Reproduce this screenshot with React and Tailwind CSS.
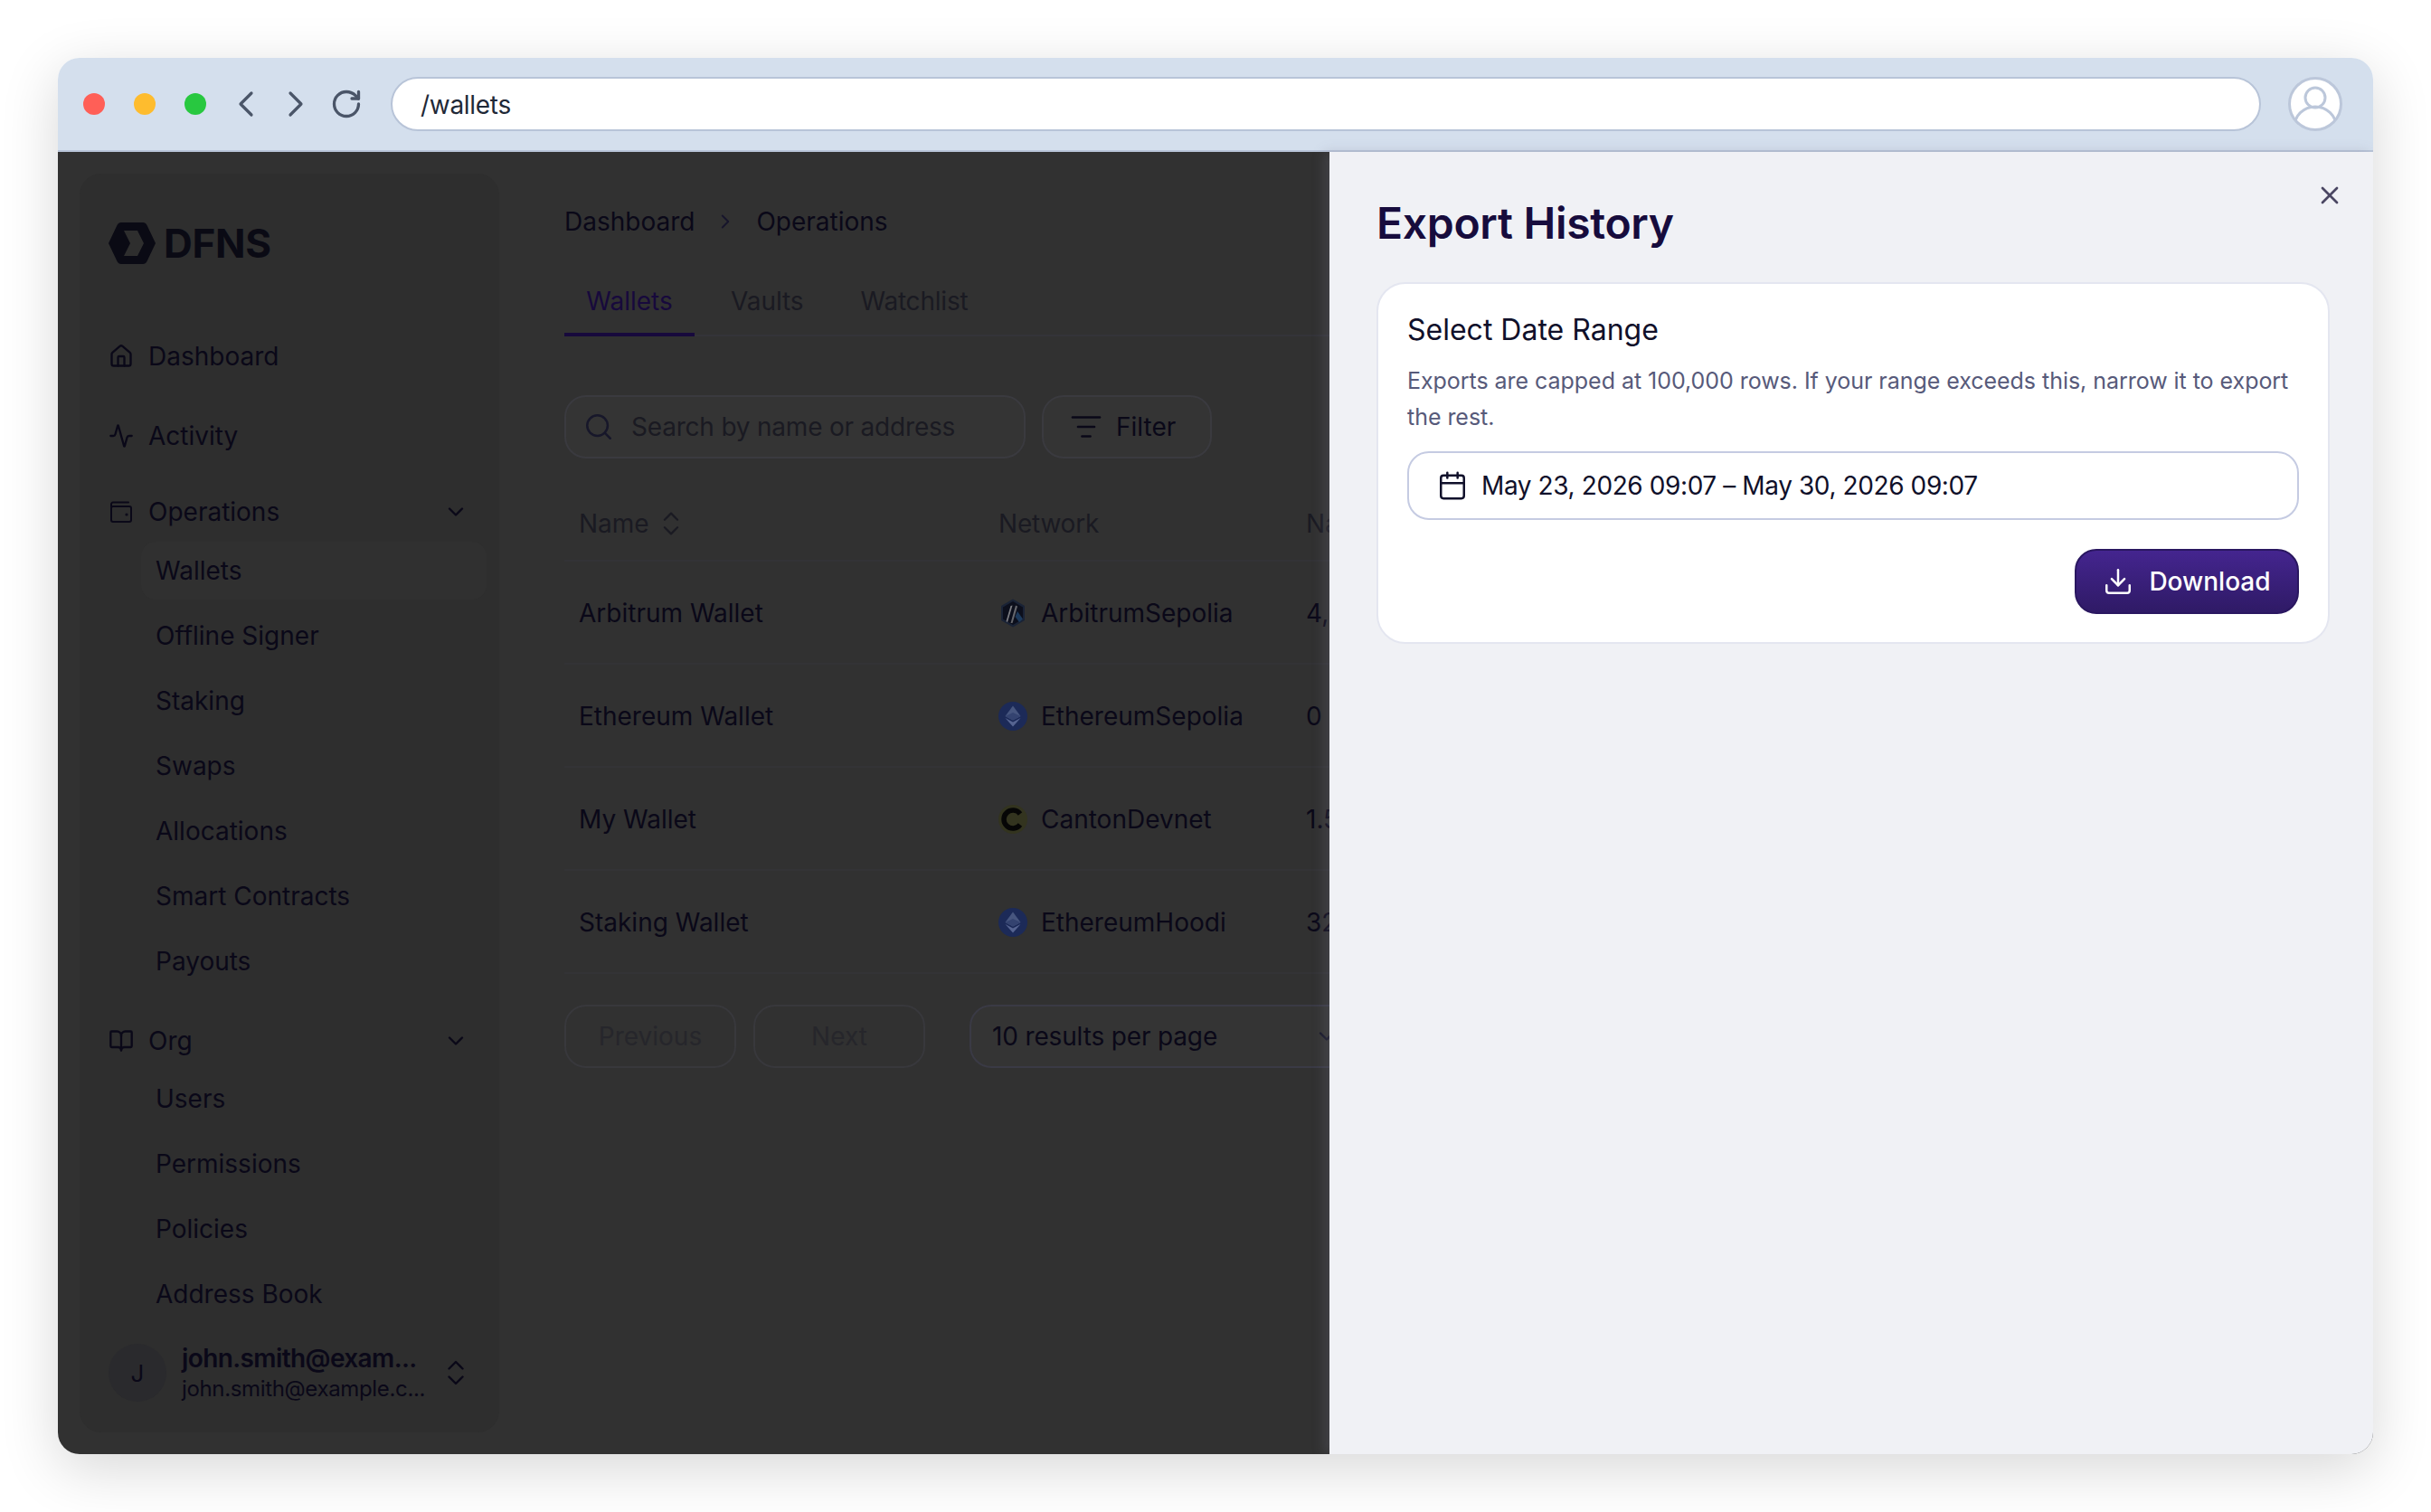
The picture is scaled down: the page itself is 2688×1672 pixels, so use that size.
import { useState } from "react";
import {
  Activity,
  BookOpen,
  Calendar,
  ChevronDown,
  ChevronLeft,
  ChevronRight,
  ChevronsUpDown,
  Download,
  House,
  ListFilter,
  RotateCw,
  Search,
  X,
} from "lucide-react";

const operations = ["Wallets", "Offline Signer", "Staking", "Swaps", "Allocations", "Smart Contracts", "Payouts"];
const org = ["Users", "Permissions", "Policies", "Address Book"];

const rows = [
  { name: "Arbitrum Wallet", network: "ArbitrumSepolia", icon: "arb", value: "4,2" },
  { name: "Ethereum Wallet", network: "EthereumSepolia", icon: "eth", value: "0" },
  { name: "My Wallet", network: "CantonDevnet", icon: "canton", value: "1.5" },
  { name: "Staking Wallet", network: "EthereumHoodi", icon: "eth", value: "32" },
];

function WalletIcon() {
  return (
    <svg width="28" height="28" viewBox="0 0 28 28" fill="none" stroke="#0a0818" strokeWidth="2" strokeLinecap="round" strokeLinejoin="round">
      <path d="M3 8V5.5A2 2 0 0 1 5 3.5h17" />
      <rect x="3" y="8" width="22" height="17" rx="2" />
      <circle cx="20" cy="17" r="0.6" />
    </svg>
  );
}

function NetworkIcon({ type }) {
  if (type === "arb") {
    return (
      <svg width="32" height="32" viewBox="0 0 32 32">
        <path d="M16 0.5 L29 8 V24 L16 31.5 L3 24 V8 Z" fill="#1a2336" />
        <path d="M16 3 L27 9.5 V22.5 L16 29 L5 22.5 V9.5 Z" fill="#0c0f1c" />
        <path d="M13.5 8 L15.5 7.5 L10 26 L8.5 25 Z" fill="#7d7e84" />
        <path d="M19 7.5 L21 8.5 L15.5 27 L13.5 27 Z" fill="#66676d" />
        <path d="M21 14 L27 22.5 L23 26 L18.5 20 Z" fill="#1d3a5c" />
      </svg>
    );
  }
  if (type === "canton") {
    return (
      <svg width="32" height="32" viewBox="0 0 32 32">
        <circle cx="16" cy="16" r="16" fill="#33341f" />
        <path d="M24 10 A10 10 0 1 0 24 22" fill="none" stroke="#060606" strokeWidth="5.5" />
      </svg>
    );
  }
  return (
    <svg width="32" height="32" viewBox="0 0 32 32">
      <circle cx="16" cy="16" r="16" fill="#1c2a58" />
      <path d="M16 4.5 L24.5 16 L16 20.5 L7.5 16 Z" fill="#47567f" />
      <path d="M7.5 18 L16 22.5 L24.5 18 L16 27.5 Z" fill="#566491" />
      <path d="M16 12 L24.5 16 L16 20.5 L7.5 16 Z" fill="#344370" />
    </svg>
  );
}

function NavRow({ icon, label, chevron, className }) {
  return (
    <div className={`flex items-center h-[64px] pl-[32px] pr-[34px] ${className}`}>
      <span className="w-[44px] flex items-center shrink-0">{icon}</span>
      <span className="flex-1 text-[28px] text-[#0a0818]">{label}</span>
      {chevron && <ChevronDown size={28} color="#0a0818" strokeWidth={2} />}
    </div>
  );
}

function SubList({ items, active, className }) {
  return (
    <div className={`ml-[68px] w-[382px] flex flex-col gap-[8px] ${className}`}>
      {items.map((item) => (
        <div
          key={item}
          className={`h-[64px] flex items-center pl-[16px] rounded-[16px] text-[28px] text-[#0a0818] ${item === active ? "bg-[#303030]" : ""}`}
        >
          {item}
        </div>
      ))}
    </div>
  );
}

function Sidebar() {
  return (
    <aside className="ml-[24px] my-[24px] w-[464px] shrink-0 bg-[#2e2e2e] rounded-[24px] flex flex-col">
      <div className="h-[170px] pl-[32px] pb-[16px] flex items-center gap-[9px]">
        <svg width="52" height="46" viewBox="0 0 52 46">
          <path fillRule="evenodd" d="M14 0 H38 Q41 0 42.5 3 L52 23 L42.5 43 Q41 46 38 46 H14 Q11 46 9.5 43 L0 23 L9.5 3 Q11 0 14 0 Z M17 9 L24 23 L17 37 H32 L39 23 L32 9 Z" fill="#0a0a14" />
        </svg>
        <span className="text-[44px] leading-none font-bold text-[#0a0a14] tracking-[-0.3px]">DFNS</span>
      </div>
      <NavRow icon={<House size={28} color="#0a0818" strokeWidth={2} />} label="Dashboard" />
      <NavRow className="mt-[24px]" icon={<Activity size={28} color="#0a0818" strokeWidth={2} />} label="Activity" />
      <NavRow className="mt-[20px]" icon={<WalletIcon />} label="Operations" chevron />
      <SubList className="mt-[1px]" items={operations} active="Wallets" />
      <NavRow className="mt-[24px]" icon={<BookOpen size={28} color="#0a0818" strokeWidth={2} />} label="Org" chevron />
      <SubList items={org} />
      <div className="mt-[21px] pl-[32px] flex items-center">
        <div className="w-[64px] h-[64px] rounded-full bg-[#2a2a2d] flex items-center justify-center text-[26px] text-[#0a0818] shrink-0">J</div>
        <div className="ml-[17px] w-[270px] flex flex-col whitespace-nowrap">
          <span className="text-[28px] leading-[36px] font-semibold tracking-[-0.6px] text-[#0a0818]">john.smith@exam...</span>
          <span className="text-[24px] leading-[32px] tracking-[-0.35px] text-[#0a0818]">john.smith@example.c...</span>
        </div>
        <ChevronsUpDown size={36} color="#0a0818" strokeWidth={1.6} className="ml-[15px]" />
      </div>
    </aside>
  );
}

function MainContent() {
  return (
    <main className="flex-1 min-w-0 pl-[72px] overflow-hidden">
      <div className="mt-[54px] flex items-center h-[46px] text-[28px] text-[#0a0818]">
        <span>Dashboard</span>
        <ChevronRight size={26} color="#17152c" className="ml-[21px] mr-[21px]" strokeWidth={1.75} />
        <span>Operations</span>
      </div>

      <div className="mt-[34px] flex h-[70px] border-b-[2px] border-[#343439] w-[900px] text-[28px] text-[#1a1a22]">
        <div className="relative w-[144px] flex items-center justify-center pb-[6px] text-[#17093c]">
          Wallets
          <div className="absolute left-0 right-0 -bottom-[2px] h-[4px] bg-[#17093c]" />
        </div>
        <div className="ml-[40px] flex items-center pb-[6px] tracking-[-0.1px]">Vaults</div>
        <div className="ml-[63px] flex items-center pb-[6px] tracking-[-0.2px]">Watchlist</div>
      </div>

      <div className="mt-[65px] flex gap-[18px]">
        <div className="w-[510px] h-[70px] rounded-[24px] border-[2px] border-[#3a3a3f] bg-[#343434] flex items-center pl-[19px] gap-[19px] text-[28px] tracking-[-0.2px] text-[#1a1a22]">
          <Search size={34} color="#17172a" strokeWidth={1.75} />
          <span>Search by name or address</span>
        </div>
        <div className="w-[188px] h-[70px] rounded-[24px] border-[2px] border-[#3a3a3f] bg-[#343434] flex items-center pl-[29px] gap-[15px] text-[28px] text-[#0a0818]">
          <ListFilter size={36} color="#0a0818" strokeWidth={1.75} />
          <span>Filter</span>
        </div>
      </div>

      <div className="mt-[30px] pt-[2px] w-[900px] border-b-[2px] border-[#333336] h-[84px] flex items-center text-[28px] text-[#1a1a22] whitespace-nowrap">
        <div className="w-[480px] shrink-0 pl-[16px] flex items-center gap-[7px]">
          Name
          <ChevronsUpDown size={34} color="#1a1a22" strokeWidth={1.6} />
        </div>
        <div className="w-[340px] shrink-0 tracking-[-0.2px]">Network</div>
        <div>Native Balance</div>
      </div>

      {rows.map((row) => (
        <div key={row.name} className="w-[900px] h-[114px] pt-[2px] border-b-[2px] border-[#333336] flex items-center text-[28px] text-[#0a0818] whitespace-nowrap">
          <div className="w-[480px] shrink-0 pl-[16px]">{row.name}</div>
          <div className="w-[340px] shrink-0 flex items-center gap-[15px]">
            <NetworkIcon type={row.icon} />
            {row.network}
          </div>
          <div>{row.value}</div>
        </div>
      ))}

      <div className="mt-[34px] flex items-center">
        <div className="w-[190px] shrink-0 h-[70px] rounded-[24px] border-[2px] border-[#38383c] flex items-center justify-center text-[28px] text-[#26262b]">Previous</div>
        <div className="ml-[19px] w-[190px] shrink-0 h-[70px] rounded-[24px] border-[2px] border-[#38383c] flex items-center justify-center text-[28px] text-[#26262b]">Next</div>
        <div className="ml-[49px] w-[433px] shrink-0 h-[70px] rounded-[24px] border-[2px] border-[#3a3a45] bg-[#343434] flex items-center pl-[23px] text-[28px] tracking-[-0.15px] text-[#0a0818]">
          <span className="flex-1">10 results per page</span>
          <ChevronDown size={28} color="#17172a" strokeWidth={2} className="mr-[22px]" />
        </div>
      </div>
    </main>
  );
}

function ExportDrawer() {
  const [range] = useState("May 23, 2026 09:07 – May 30, 2026 09:07");

  return (
    <section className="w-[1154px] shrink-0 bg-[#f0f1f5] pl-[52px] pr-[48px] shadow-[-6px_0_12px_rgba(120,120,140,0.25)] relative">
      <button className="absolute top-[32px] right-[32px] text-[#4a4662]">
        <X size={32} strokeWidth={2} />
      </button>
      <h2 className="mt-[46px] h-[66px] flex items-center text-[48px] font-semibold tracking-[-0.3px] text-[#170c3d]">Export History</h2>
      <div className="mt-[32px] h-[400px] bg-white rounded-[32px] border-[2px] border-[#e4e6f0] px-[32px] pt-[31px]">
        <div className="h-[40px] flex items-center text-[32px] text-[#10102a]">Select Date Range</div>
        <p className="mt-[16px] text-[25px] leading-[40px] tracking-[-0.04px] text-[#575a7a]">
          Exports are capped at 100,000 rows. If your range exceeds this, narrow it to export the rest.
        </p>
        <div className="mt-[18px] h-[76px] rounded-[24px] border-[2px] border-[#c5cbe2] flex items-center pl-[31px] gap-[15px] text-[28px] tracking-[-0.4px] text-[#10102a]">
          <Calendar size={34} color="#10102a" strokeWidth={1.75} />
          <span>{range}</span>
        </div>
        <div className="mt-[32px] flex justify-end">
          <button className="w-[248px] h-[72px] rounded-[24px] bg-gradient-to-b from-[#44258f] to-[#2f1a66] border-[2px] border-[#2a1760] flex items-center justify-center gap-[17px] text-[28px] font-medium text-white">
            <Download size={34} strokeWidth={1.75} />
            Download
          </button>
        </div>
      </div>
    </section>
  );
}

export default function App() {
  return (
    <div className="w-[2688px] h-[1672px] bg-white p-[64px] font-['Inter',sans-serif] overflow-hidden">
      <div className="h-[1544px] rounded-[24px] overflow-hidden flex flex-col shadow-[0_16px_64px_rgba(0,0,0,0.16)]">
        <header className="h-[104px] shrink-0 bg-[#d4dfed] border-b-[2px] border-[#b8c4d8] flex items-center pl-[28px] pr-[34px]">
          <div className="flex gap-[32px]">
            <div className="w-[24px] h-[24px] rounded-full bg-[#ff5f57]" />
            <div className="w-[24px] h-[24px] rounded-full bg-[#febc2e]" />
            <div className="w-[24px] h-[24px] rounded-full bg-[#28c840]" />
          </div>
          <div className="ml-[20px] flex items-center text-[#4a5568]">
            <ChevronLeft size={48} strokeWidth={1.6} />
            <ChevronRight size={48} strokeWidth={1.6} className="ml-[7px]" />
            <RotateCw size={36} strokeWidth={2.2} className="ml-[14px]" />
          </div>
          <div className="ml-[31px] flex-1 h-[60px] pt-[1px] bg-white rounded-[30px] border-[2px] border-[#b8c4d8] flex items-center pl-[31px] text-[28px] tracking-[-0.3px] text-[#1f2937]">
            /wallets
          </div>
          <svg className="ml-[30px]" width="60" height="60" viewBox="0 0 60 60" fill="none" stroke="#bcc7da" strokeWidth="3">
            <clipPath id="avatar"><circle cx="30" cy="30" r="28.5" /></clipPath>
            <circle cx="30" cy="30" r="28.5" fill="#fff" />
            <circle cx="30" cy="23" r="11" />
            <ellipse cx="30" cy="55" rx="23" ry="22" clipPath="url(#avatar)" />
          </svg>
        </header>
        <div className="flex-1 min-h-0 flex bg-[#313131]">
          <Sidebar />
          <MainContent />
          <ExportDrawer />
        </div>
      </div>
    </div>
  );
}
